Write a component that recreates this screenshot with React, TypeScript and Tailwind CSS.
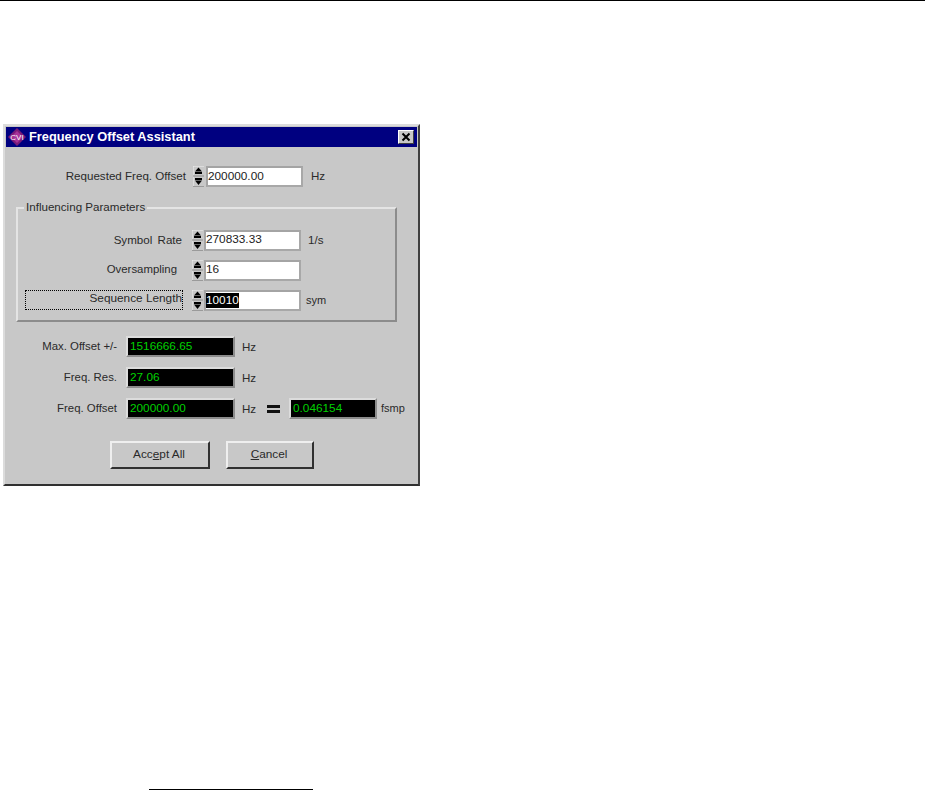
const face = 'bg-[#c8c8c8]';

function Spinner() {
  return (
    <svg width="11" height="21" viewBox="0 0 11 21" className="shrink-0 block">
      <rect width="11" height="21" fill="#c8c8c8" />
      <path d="M0 0H11M0 0V21" stroke="#efefef" strokeWidth="1" />
      <path d="M2 5.5L5.5 1.5L9 5.5Z" fill="#000" />
      <rect x="2" y="6" width="7" height="2" fill="#000" />
      <rect x="2" y="12" width="7" height="2" fill="#000" />
      <path d="M2 14.5L5.5 19L9 14.5Z" fill="#000" />
      <path d="M0 10H11" stroke="#8a8a8a" strokeWidth="1" />
      <path d="M0 20.5H11" stroke="#9a9a9a" strokeWidth="1" />
    </svg>
  );
}

function NumInput({ value, selected, width }: { value: string; selected?: boolean; width: string }) {
  return (
    <div className={`h-[21px] ${width} bg-white border-2 border-t-[#a4a4a4] border-l-[#a4a4a4] border-r-[#a8a8a8] border-b-[#a8a8a8] flex items-center text-[11.8px] text-[#1c1c1c] shrink-0`}>
      {selected ? <span className="bg-black text-white leading-[15px]">{value}</span> : value}
    </div>
  );
}

function Readout({ value, width }: { value: string; width: string }) {
  return (
    <div className={`h-[21px] ${width} bg-black border-2 border-t-[#dcdcdc] border-l-[#dcdcdc] border-r-[#8c8c8c] border-b-[#8c8c8c] flex items-center pl-[2px] text-[11.8px] text-[#00d000] shrink-0`}>
      {value}
    </div>
  );
}

function ReadoutRow({ label, value, children }: { label: string; value: string; children?: React.ReactNode }) {
  return (
    <div className="flex items-center mt-[10px] h-[21px]">
      <div className="w-[111px] text-right text-[11.4px] leading-none shrink-0">{label}</div>
      <div className="w-[9px] shrink-0" />
      <Readout value={value} width="w-[109px]" />
      <span className="ml-[7px] w-[25px] shrink-0 text-[11.6px]">Hz</span>
      {children}
    </div>
  );
}

function Button({ width, children }: { width: string; children: React.ReactNode }) {
  return (
    <div className={`${width} h-[28px] ${face} border-2 border-t-[#efefef] border-l-[#efefef] border-r-[#303030] border-b-[#303030] flex items-center justify-center pr-[2px] text-[11.8px]`}>
      {children}
    </div>
  );
}

export default function App() {
  return (
    <div className="w-[925px] h-[790px] bg-white overflow-hidden flex flex-col font-['Liberation_Sans',Arial,sans-serif]">
      <div className="h-px bg-black shrink-0" />
      {/* dialog */}
      <div className={`ml-[3px] mt-[123px] w-[417px] h-[362px] shrink-0 ${face} border-2 border-t-[#dcdcdc] border-l-[#dcdcdc] border-r-[#404040] border-b-[#303030] p-px text-[#2a2a2a]`}>
        <div className="h-[20px] bg-[#000080] flex items-center pl-[2px] pr-[3px]">
          <svg width="18" height="18" viewBox="0 0 18 18" className="shrink-0">
            <path d="M9 0L18 9L9 18L0 9Z" fill="#7a1a78" />
            <path d="M9 3L15 9L9 15L3 9Z" fill="#a8329a" />
            <text x="9" y="12" textAnchor="middle" fontSize="8" fill="#fff" fontFamily="Liberation Sans">CVI</text>
          </svg>
          <span className="ml-[3px] text-white font-bold text-[12.8px]">Frequency Offset Assistant</span>
          <div className={`ml-auto w-[16px] h-[14px] ${face} border border-t-white border-l-white border-r-[#404040] border-b-[#404040] flex items-center justify-center`}>
            <svg width="10" height="10" viewBox="0 0 10 10">
              <path d="M1.5 1.5L8.5 8.5M8.5 1.5L1.5 8.5" stroke="#000" strokeWidth="2" />
            </svg>
          </div>
        </div>

        {/* requested offset */}
        <div className="flex items-center h-[21px] mt-[19px]">
          <div className="w-[180px] text-right text-[11.6px] pb-[2px] shrink-0">Requested Freq. Offset</div>
          <div className="ml-[7px]"><Spinner /></div>
          <div className="ml-[2px]"><NumInput value="200000.00" width="w-[97px]" /></div>
          <span className="ml-[8px] text-[11.6px] pb-[2px]">Hz</span>
        </div>

        {/* group box */}
        <div className="relative ml-[10px] mt-[20px] w-[381px] h-[115px] border-2 border-t-[#e4e4e4] border-l-[#e4e4e4] border-r-[#8c8c8c] border-b-[#8c8c8c] pl-[7px]">
          <span className={`absolute left-[6px] top-[-9px] ${face} px-[2px] text-[11.6px] leading-[14px]`}>Influencing Parameters</span>
          <div className="flex items-center h-[20px] mt-[21px]">
            <div className="w-[158px] text-right text-[11.6px] pr-[1px] shrink-0 [word-spacing:2px]">Symbol Rate</div>
            <div className="ml-[9px]"><Spinner /></div>
            <div className="ml-[1px]"><NumInput value="270833.33" width="w-[97px]" /></div>
            <span className="ml-[7px] text-[11.6px]">1/s</span>
          </div>
          <div className="flex items-center h-[20px] mt-[10px]">
            <div className="w-[158px] text-right text-[11.4px] pr-[6px] shrink-0">Oversampling</div>
            <div className="ml-[9px]"><Spinner /></div>
            <div className="ml-[1px]"><NumInput value="16" width="w-[97px]" /></div>
          </div>
          <div className="flex items-center h-[20px] mt-[10px]">
            <div className="w-[158px] h-[20px] border border-dotted border-black flex items-center justify-end pb-[2px] text-[11.8px] shrink-0">Sequence Length</div>
            <div className="ml-[9px]"><Spinner /></div>
            <div className="ml-[1px]"><NumInput value="10010" selected width="w-[97px]" /></div>
            <span className="ml-[5px] text-[11px]">sym</span>
          </div>
        </div>

        {/* read-only values */}
        <div className="pt-[4px]">
          <ReadoutRow label="Max. Offset +/-" value="1516666.65" />
          <ReadoutRow label="Freq. Res." value="27.06" />
          <ReadoutRow label="Freq. Offset" value="200000.00">
            <svg width="13" height="8" viewBox="0 0 13 8" className="shrink-0">
              <rect width="13" height="3" fill="#111" />
              <rect y="5" width="13" height="3" fill="#111" />
            </svg>
            <div className="ml-[9px]"><Readout value="0.046154" width="w-[88px]" /></div>
            <span className="ml-[4px] text-[11px]">fsmp</span>
          </ReadoutRow>
        </div>

        {/* buttons */}
        <div className="flex mt-[22px] ml-[104px] gap-[16px]">
          <Button width="w-[100px]"><span>Acc<u>e</u>pt All</span></Button>
          <Button width="w-[88px]"><span><u>C</u>ancel</span></Button>
        </div>
      </div>
      <div className="mt-auto ml-[149px] w-[164px] h-px bg-black shrink-0" />
    </div>
  );
}
